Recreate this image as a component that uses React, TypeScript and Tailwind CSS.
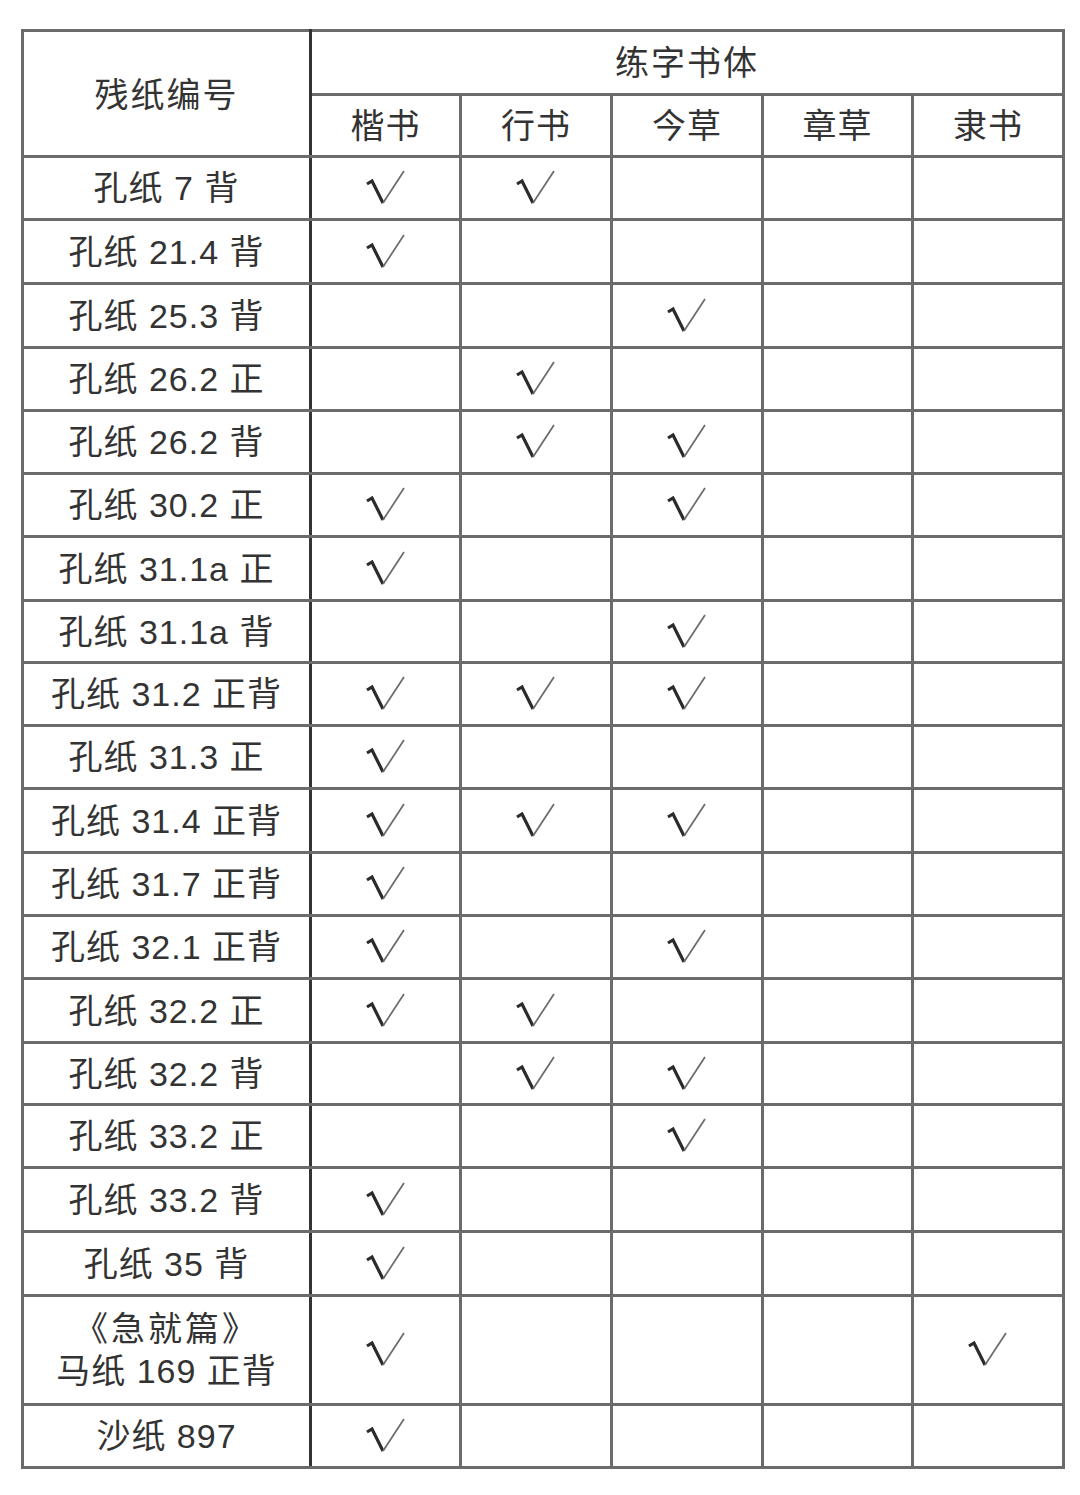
import React from "react";

type Row = { label: React.ReactNode; marks: number[]; h: number };

// columns: 0 楷书, 1 行书, 2 今草, 3 章草, 4 隶书
const rows: Row[] = [
  { label: "孔纸 7 背", marks: [0, 1], h: 63 },
  { label: "孔纸 21.4 背", marks: [0], h: 64 },
  { label: "孔纸 25.3 背", marks: [2], h: 64 },
  { label: "孔纸 26.2 正", marks: [1], h: 63 },
  { label: "孔纸 26.2 背", marks: [1, 2], h: 63 },
  { label: "孔纸 30.2 正", marks: [0, 2], h: 63 },
  { label: "孔纸 31.1a 正", marks: [0], h: 64 },
  { label: "孔纸 31.1a 背", marks: [2], h: 62 },
  { label: "孔纸 31.2 正背", marks: [0, 1, 2], h: 63 },
  { label: "孔纸 31.3 正", marks: [0], h: 63 },
  { label: "孔纸 31.4 正背", marks: [0, 1, 2], h: 64 },
  { label: "孔纸 31.7 正背", marks: [0], h: 63 },
  { label: "孔纸 32.1 正背", marks: [0, 2], h: 63 },
  { label: "孔纸 32.2 正", marks: [0, 1], h: 64 },
  { label: "孔纸 32.2 背", marks: [1, 2], h: 62 },
  { label: "孔纸 33.2 正", marks: [2], h: 63 },
  { label: "孔纸 33.2 背", marks: [0], h: 64 },
  { label: "孔纸 35 背", marks: [0], h: 64 },
  {
    label: (
      <>
        <span className="tracking-[3px]">《急就篇》</span>
        <br />
        马纸 169 正背
      </>
    ),
    marks: [0, 4],
    h: 109,
  },
  { label: "沙纸 897", marks: [0], h: 63 },
];

const styles = ["楷书", "行书", "今草", "章草", "隶书"];

const Check = () => (
  <svg width="40" height="36" viewBox="0 0 40 36" className="mx-auto block">
    <path d="M1 14 L6 11 L17 33" fill="none" stroke="#2b2b2b" strokeWidth="3.2" strokeLinejoin="miter" />
    <path d="M17 33 L38 1" fill="none" stroke="#6a6a6a" strokeWidth="1.7" />
  </svg>
);

export default function App() {
  return (
    <div
      className="min-h-[1495px] w-[1080px] bg-white pt-[29px] pl-[21px] text-[#333]"
      style={{ fontFamily: '"Liberation Sans", "Noto Sans CJK SC", sans-serif' }}
    >
      <table className="table-fixed border-collapse border-[3px] border-[#7a7a7a] text-[34px] leading-[42px]">
        <colgroup>
          <col className="w-[288px]" />
          <col className="w-[150px]" />
          <col className="w-[151px]" />
          <col className="w-[151px]" />
          <col className="w-[150px]" />
          <col className="w-[151px]" />
        </colgroup>
        <thead>
          <tr className="h-[64px]">
            <th
              rowSpan={2}
              className="border-[3px] border-[#6b6b6b] border-r-[#333] font-normal tracking-[2px] pt-[2px]"
            >
              残纸编号
            </th>
            <th colSpan={5} className="border-[3px] border-[#6b6b6b] font-normal tracking-[2px]">
              练字书体
            </th>
          </tr>
          <tr className="h-[62px]">
            {styles.map((s, i) => (
              <th
                key={s}
                className={`border-[3px] border-[#6b6b6b] font-normal tracking-[1px] ${
                  i === 2 ? "border-l-[#777]" : "border-l-[#333]"
                }`}
              >
                {s}
              </th>
            ))}
          </tr>
        </thead>
        <tbody>
          {rows.map((r, ri) => (
            <tr key={ri} style={{ height: r.h }}>
              <td className="border-[3px] border-[#6b6b6b] border-r-[#333] text-center tracking-[1px]">
                {r.label}
              </td>
              {styles.map((s, ci) => (
                <td
                  key={s}
                  className={`border-[3px] border-[#6b6b6b] text-center ${
                    ci === 2 ? "border-l-[#777]" : "border-l-[#333]"
                  }`}
                >
                  {r.marks.includes(ci) ? <Check /> : null}
                </td>
              ))}
            </tr>
          ))}
        </tbody>
      </table>
    </div>
  );
}
